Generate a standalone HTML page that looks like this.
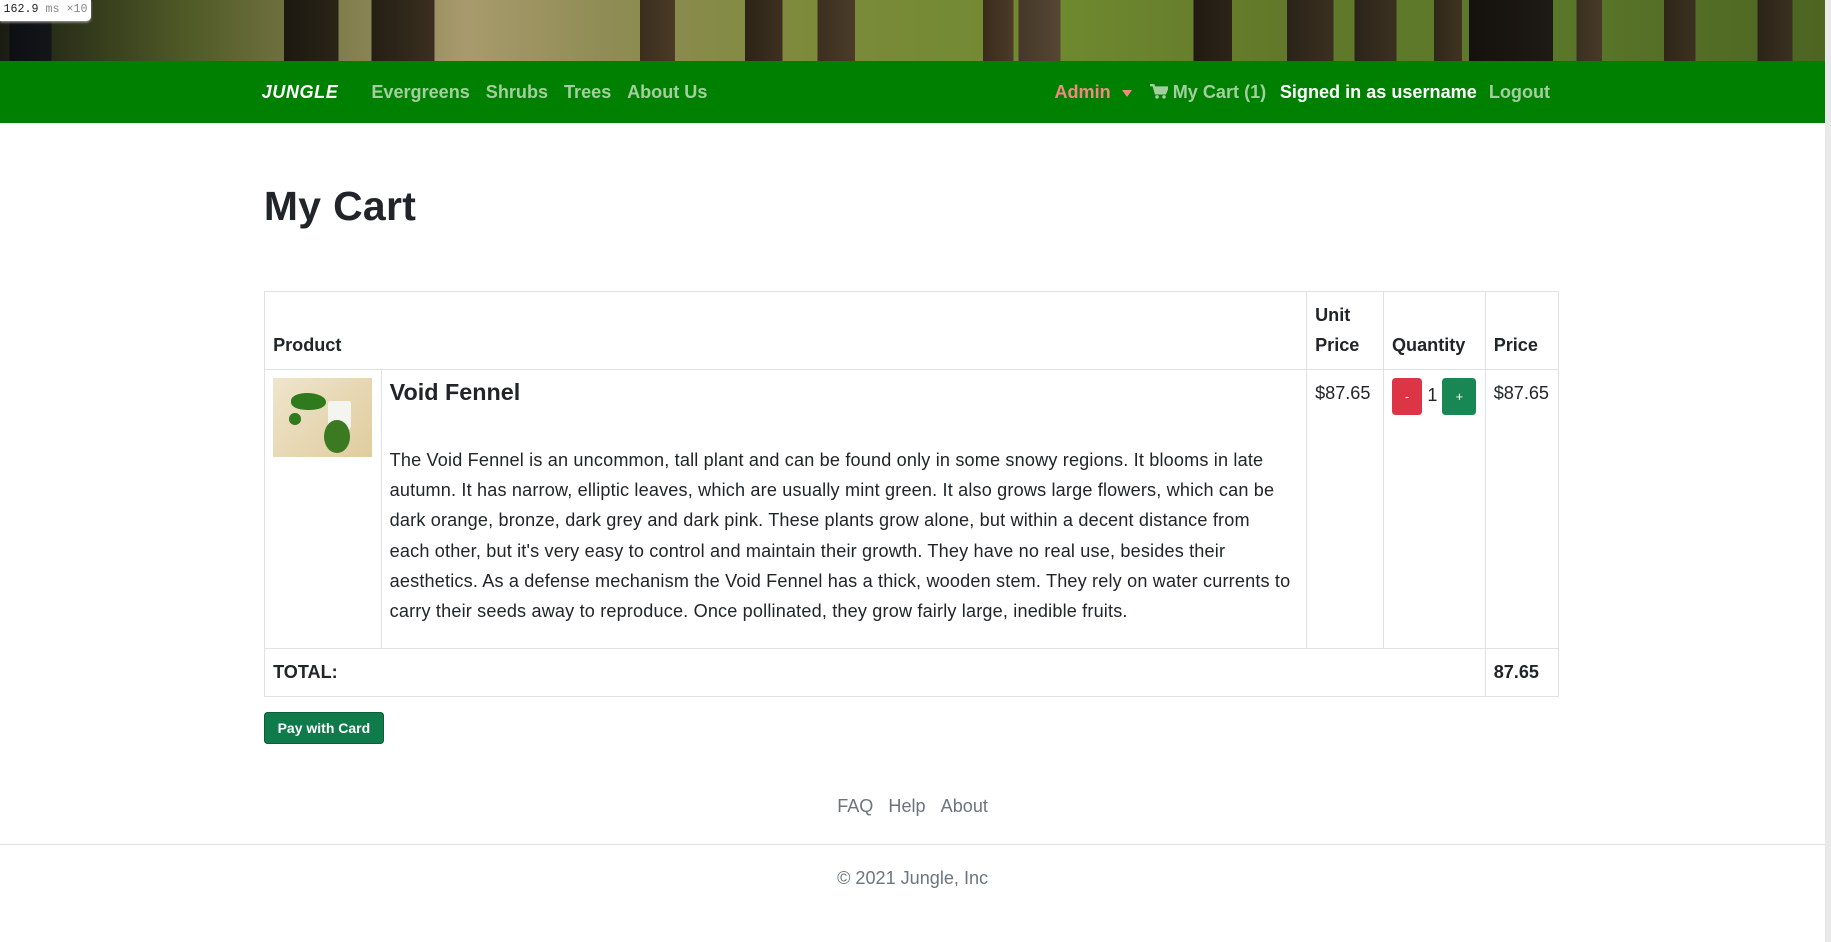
<!DOCTYPE html>
<html><head><meta charset="utf-8">
<style>
html,body{margin:0;padding:0;}
html{zoom:1.16773;}
body{width:1568px;height:807px;overflow:hidden;font-family:"Liberation Sans",sans-serif;color:#212529;background:#fff;position:relative;}
.hero{position:absolute;left:0;top:0;width:1568px;height:52px;
background:
linear-gradient(90deg,transparent 0,transparent 8px,#0e0f14 8px,#141518 44px,transparent 44px,transparent 243px,#1c1810 243px,#2a2418 290px,transparent 290px,transparent 318px,#241e14 318px,#3a2f20 372px,transparent 372px,transparent 548px,#3b2e1e 548px,#4a3a26 578px,transparent 578px,transparent 638px,#2c2416 638px,#3d3020 670px,transparent 670px,transparent 700px,#3c2f20 700px,#4a3c28 732px,transparent 732px,transparent 842px,#3a2c1c 842px,#4b3b28 868px,transparent 868px,transparent 872px,#45382a 872px,#564632 908px,transparent 908px,transparent 1022px,#201a12 1022px,#2c2418 1055px,transparent 1055px,transparent 1102px,#2a2318 1102px,#3a3020 1142px,transparent 1142px,transparent 1160px,#2b2419 1160px,#3b3121 1196px,transparent 1196px,transparent 1228px,#2f2719 1228px,#3f3422 1252px,transparent 1252px,transparent 1258px,#14120e 1258px,#1e1a14 1330px,transparent 1330px,transparent 1350px,#3a2f20 1350px,#473a27 1372px,transparent 1372px,transparent 1425px,#2e2618 1425px,#3c3120 1452px,transparent 1452px,transparent 1505px,#2a2418 1505px,#3a3020 1535px,transparent 1535px),
linear-gradient(90deg,#1a1c12 0,#4f5a26 160px,#a89a6c 400px,#8f8c55 520px,#7c8a3a 700px,#6f8a30 900px,#62782a 1100px,#5c7a2a 1300px,#4d6422 1568px);}
.nav{position:absolute;left:0;top:52px;width:1563px;height:53px;background:#008000;}
.nav span{position:absolute;top:18px;font-size:15.5px;font-weight:bold;color:#a3cf9f;white-space:nowrap;}
.scroll{position:absolute;right:0;top:0;width:5px;height:807px;background:#e8e8e8;}
h1{position:absolute;left:226px;top:157px;margin:0;font-size:35px;font-weight:bold;letter-spacing:0.3px;}
table{position:absolute;left:226px;top:249px;width:1109px;border-collapse:collapse;font-size:15.5px;}
td,th{border:1px solid #dee2e6;padding:7px;vertical-align:top;line-height:26px;text-align:left;}
th{vertical-align:bottom;font-weight:bold;}
.desc{white-space:nowrap;letter-spacing:0.15px;font-size:15.5px;}
.btn{display:inline-block;color:#fff;font-size:11px;border-radius:3px;text-align:center;vertical-align:top;height:32px;line-height:32px;}
.foot{position:absolute;width:1563px;text-align:center;color:#6c757d;font-size:15.5px;}
</style></head><body>
<div class="hero"></div>
<div class="nav">
<span style="left:224px;color:#fff;font-style:italic;font-weight:900;letter-spacing:0.5px;">JUNGLE</span>
<span style="left:318px;">Evergreens</span>
<span style="left:416px;">Shrubs</span>
<span style="left:483px;">Trees</span>
<span style="left:537px;">About Us</span>
<span style="left:903px;color:#f08a80;">Admin</span>
<span style="left:961px;top:25px;width:0;height:0;border-left:5px solid transparent;border-right:5px solid transparent;border-top:6px solid #f08a80;"></span>
<span style="left:985px;"><svg width="15" height="13" viewBox="0 0 15 13" style="vertical-align:-1px"><path d="M0 1h3l2 7h8l2-5H4" fill="none" stroke="#a3cf9f" stroke-width="2"/><rect x="4" y="3" width="10" height="5" fill="#a3cf9f"/><circle cx="6" cy="11" r="1.5" fill="#a3cf9f"/><circle cx="12" cy="11" r="1.5" fill="#a3cf9f"/></svg> My Cart (1)</span>
<span style="left:1096px;color:#fff;">Signed in as username</span>
<span style="left:1275px;">Logout</span>
</div>
<div class="scroll"></div>
<h1>My Cart</h1>
<table>
<tr style="height:66px"><th colspan="2">Product</th><th style="width:51px">Unit Price</th><th style="width:70px">Quantity</th><th style="width:48px">Price</th></tr>
<tr style="height:239px">
<td style="width:85px"><div style="width:85px;height:68px;background:linear-gradient(135deg,#efe5cc,#e0cc9e);position:relative;overflow:hidden">
<div style="position:absolute;left:47px;top:20px;width:20px;height:26px;background:#f4f4f0;border-radius:2px 2px 6px 6px"></div>
<div style="position:absolute;left:15px;top:13px;width:30px;height:14px;background:#2f7a1c;border-radius:50% 60% 50% 50%"></div>
<div style="position:absolute;left:44px;top:36px;width:22px;height:28px;background:#3b7a20;border-radius:50%"></div>
<div style="position:absolute;left:14px;top:30px;width:10px;height:10px;background:#2f7a1c;border-radius:50%"></div>
</div></td>
<td><div style="font-size:20px;font-weight:bold;line-height:24px;margin-bottom:33px;">Void Fennel</div>
<div class="desc">The Void Fennel is an uncommon, tall plant and can be found only in some snowy regions. It blooms in late<br>autumn. It has narrow, elliptic leaves, which are usually mint green. It also grows large flowers, which can be<br>dark orange, bronze, dark grey and dark pink. These plants grow alone, but within a decent distance from<br>each other, but it's very easy to control and maintain their growth. They have no real use, besides their<br>aesthetics. As a defense mechanism the Void Fennel has a thick, wooden stem. They rely on water currents to<br>carry their seeds away to reproduce. Once pollinated, they grow fairly large, inedible fruits.</div></td>
<td>$87.65</td>
<td style="white-space:nowrap"><span class="btn" style="background:#dc3545;width:26px">-</span> <span style="vertical-align:top;line-height:30px">1</span> <span class="btn" style="background:#198754;width:29px">+</span></td>
<td>$87.65</td>
</tr>
<tr style="height:40px"><th colspan="4" style="vertical-align:middle">TOTAL:</th><th style="vertical-align:middle">87.65</th></tr>
</table>
<div style="position:absolute;left:226px;top:610px;width:101px;height:25px;background:#0f7a4a;border:1px solid #0a5e38;border-radius:3px;color:#fff;font-size:12px;font-weight:bold;text-align:center;line-height:26px;">Pay with Card</div>
<div class="foot" style="top:682px;">FAQ &nbsp;&nbsp;Help &nbsp;&nbsp;About</div>
<div style="position:absolute;left:0;top:723px;width:1563px;height:1px;background:#dee2e6"></div>
<div class="foot" style="top:743px;">© 2021 Jungle, Inc</div>
<div style="position:absolute;left:0;top:0;width:75px;height:18px;background:#fff;border-radius:0 0 4px 0;font-family:'Liberation Mono',monospace;font-size:10px;line-height:16px;padding-left:3px;box-shadow:0 1px 2px #999">162.9<span style="color:#888"> ms ×10</span></div>
</body></html>
